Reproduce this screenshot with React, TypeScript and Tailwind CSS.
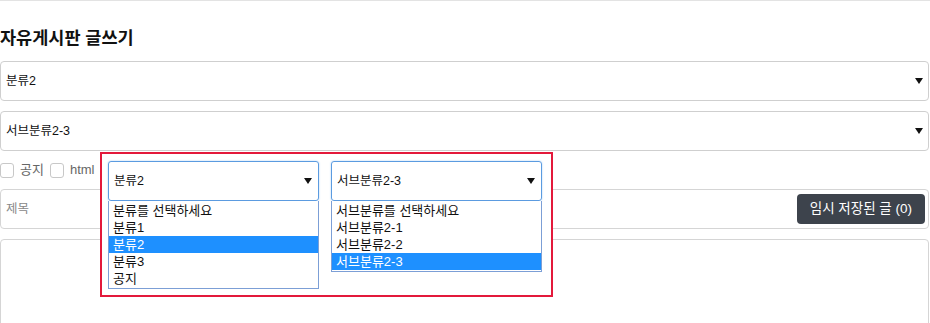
import React from 'react';

const FONT = "font-['Liberation_Sans','Noto_Sans_CJK_KR',sans-serif]";

// small black triangle used by every select
const Caret: React.FC = () => (
  <svg width="8" height="6" viewBox="0 0 8 6" className="shrink-0">
    <path d="M0 0 L8 0 L4 6 Z" fill="#111" />
  </svg>
);

const PageSelect: React.FC<{ value: string }> = ({ value }) => (
  <div className="h-[40px] border border-[#cfcfcf] rounded-[4px] flex items-center justify-between pl-[5px] pr-[5px] text-[12.5px] text-[#111]">
    <span>{value}</span>
    <Caret />
  </div>
);

interface OpenSelectProps {
  value: string;
  options: string[];
  selected: number;
}

// opened native-like select, as captured in the highlighted box
const OpenSelect: React.FC<OpenSelectProps> = ({ value, options, selected }) => (
  <div className="w-[211px] flex flex-col">
    <div className="h-[40px] border border-[#5b9be0] rounded-[3px] shadow-[0_0_2px_#a9cdf3] flex items-center justify-between pl-[5px] pr-[6px] text-[12.5px] text-[#111]">
      <span>{value}</span>
      <Caret />
    </div>
    <div className="border border-[#7c9fd6] border-t-0 bg-white pt-[1px] pb-[1px]">
      {options.map((opt, i) => (
        <div
          key={opt}
          className={
            i === selected
              ? 'h-[17px] leading-[17px] pl-[4px] text-[13px] bg-[#1e90ff] text-white'
              : 'h-[17px] leading-[17px] pl-[4px] text-[13px] text-[#111]'
          }
        >
          {opt}
        </div>
      ))}
    </div>
  </div>
);

const Checkbox: React.FC<{ label: string }> = ({ label }) => (
  <label className="flex items-center gap-[6px]">
    <span className="w-[14px] h-[15px] border border-[#c8c8c8] rounded-[3px] bg-white" />
    <span className="text-[13px] text-[#666]">{label}</span>
  </label>
);

export default function App() {
  return (
    <div className={`relative w-[930px] h-[323px] overflow-hidden bg-white ${FONT}`}>
      <div className="border-t border-[#e3e3e3]" />

      <div className="pr-[1px]">
        <h3 className="pt-[27px] text-[17.5px] leading-[20px] font-bold text-[#111]">자유게시판 글쓰기</h3>

        <div className="mt-[13px]">
          <PageSelect value="분류2" />
        </div>
        <div className="mt-[10px]">
          <PageSelect value="서브분류2-3" />
        </div>

        <div className="mt-[11px] h-[16px] flex items-center gap-[6px]">
          <Checkbox label="공지" />
          <Checkbox label="html" />
        </div>

        <div className="mt-[11px] h-[40px] border border-[#d5d5d5] rounded-[4px] flex items-center justify-between pl-[5px] pr-[3px]">
          <span className="text-[12.5px] text-[#888]">제목</span>
          <button
            type="button"
            className="h-[30px] px-[13px] rounded-[4px] bg-[#3d434c] text-white text-[13.5px]"
          >
            임시 저장된 글 (0)
          </button>
        </div>

        <div className="mt-[10px] h-[100px] border border-[#d5d5d5] rounded-[4px]" />
      </div>

      {/* highlighted capture of the opened selects */}
      <div className="absolute left-[100px] top-[152px] w-[453px] h-[145px] border-2 border-[#e3193b] bg-white">
        <div className="flex gap-[12px] pt-[7px] pl-[6px]">
          <OpenSelect
            value="분류2"
            options={['분류를 선택하세요', '분류1', '분류2', '분류3', '공지']}
            selected={2}
          />
          <OpenSelect
            value="서브분류2-3"
            options={['서브분류를 선택하세요', '서브분류2-1', '서브분류2-2', '서브분류2-3']}
            selected={3}
          />
        </div>
      </div>
    </div>
  );
}
